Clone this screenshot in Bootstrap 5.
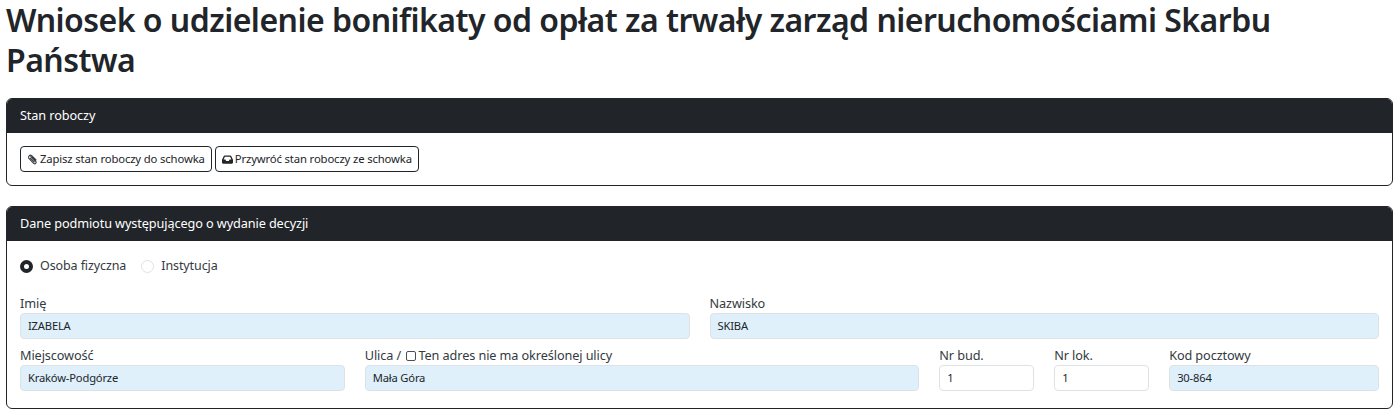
<!DOCTYPE html>
<html lang="pl">
<head>
<meta charset="utf-8">
<title>Wniosek</title>
<link href="https://cdn.jsdelivr.net/npm/bootstrap@5.3.0/dist/css/bootstrap.min.css" rel="stylesheet">
<style>
body{font-family:"Noto Sans","Open Sans",sans-serif;font-size:12px;color:#212529;letter-spacing:-.1px}
.page-wrap{padding:0 2px 0 6px}
.page-title{font-size:32px;line-height:40px;font-weight:600;margin:0 0 18px;letter-spacing:-.53px}
.panel{border:1px solid #212529;border-radius:6px;margin-bottom:20px;overflow:hidden}
.panel-head{background:#212529;color:#fff;height:34px;padding:0 13px;display:flex;align-items:center;font-size:12.7px}
.panel-body{padding:13px 13px 13px}
.btn-line{display:flex;gap:3px}
.tool-btn{font-size:11.3px;letter-spacing:-.14px;line-height:16px;padding:4px 6px;height:26px;border:1px solid #212529;border-radius:4px;color:#212529;background:#fff;display:inline-flex;align-items:center;gap:2px;white-space:nowrap}
.tool-btn svg{width:11px;height:11px;flex:none}
.radio-line{display:flex;align-items:center;gap:15px;height:25px;margin-bottom:14px;font-size:12.5px}
.radio-line label{display:flex;align-items:center;gap:7px;margin:0;color:#343a40}
.radio-mark{width:13px;height:13px;border-radius:50%;background:#fff;border:1px solid #dee2e6;flex:none}
.radio-mark.is-on{border:4px solid #212529}
.field-row{--bs-gutter-x:20px;--bs-gutter-y:0;margin-bottom:6px}
.field-row:last-child{margin-bottom:4px}
.field-label{display:block;font-size:12.7px;line-height:20px;margin:0;color:#343a40}
.field-box{height:26px;font-size:11.2px;letter-spacing:-.18px;line-height:24px;padding:0 7px;border:1px solid #dee2e6;border-radius:4px;background:#fff;color:#212529;width:100%;display:block}
.field-box.is-filled{background:#dff0fb}
.tick{width:10px;height:10px;border:1px solid #495057;border-radius:2px;display:inline-block;vertical-align:-1px;margin:0 -1px 0 2px}
</style>
</head>
<body>
<div class="page-wrap">
<h1 class="page-title">Wniosek o udzielenie bonifikaty od opłat za trwały zarząd nieruchomościami Skarbu Państwa</h1>

<section class="panel">
<div class="panel-head">Stan roboczy</div>
<div class="panel-body btn-line">
<button type="button" class="tool-btn"><svg viewBox="0 0 16 16" fill="none" stroke="#343a40" stroke-width="1.6"><path d="M5 3l8 8a2.2 2.2 0 0 1-3 3L2.500 6a3 3 0 0 1 4-4l7 7"/><path d="M7 4l6 6M4.500 5.500l6.500 6.500"/></svg>Zapisz stan roboczy do schowka</button>
<button type="button" class="tool-btn"><svg viewBox="0 0 16 16"><path fill="#212529" d="M4 2h8a1.500 1.500 0 0 1 1.400 1L16 8.500V12.500a1.500 1.500 0 0 1-1.500 1.500h-13A1.500 1.500 0 0 1 0 12.500V8.500L2.600 3A1.500 1.500 0 0 1 4 2zm.2 2L2.400 8H5l1 2h4l1-2h2.600L11.800 4z"/></svg>Przywróć stan roboczy ze schowka</button>
</div>
</section>

<section class="panel mb-0">
<div class="panel-head">Dane podmiotu występującego o wydanie decyzji</div>
<div class="panel-body">
<div class="radio-line">
<label><span class="radio-mark is-on"></span>Osoba fizyczna</label>
<label><span class="radio-mark"></span>Instytucja</label>
</div>
<div class="row field-row">
<div class="col-6"><span class="field-label">Imię</span><div class="field-box is-filled">IZABELA</div></div>
<div class="col-6"><span class="field-label">Nazwisko</span><div class="field-box is-filled">SKIBA</div></div>
</div>
<div class="row field-row">
<div class="col-3"><span class="field-label">Miejscowość</span><div class="field-box is-filled">Kraków-Podgórze</div></div>
<div class="col-5"><span class="field-label">Ulica / <span class="tick"></span> Ten adres nie ma określonej ulicy</span><div class="field-box is-filled">Mała Góra</div></div>
<div class="col-1"><span class="field-label">Nr bud.</span><div class="field-box">1</div></div>
<div class="col-1"><span class="field-label">Nr lok.</span><div class="field-box">1</div></div>
<div class="col-2"><span class="field-label">Kod pocztowy</span><div class="field-box is-filled">30-864</div></div>
</div>
</div>
</section>
</div>
<script src="https://cdn.jsdelivr.net/npm/bootstrap@5.3.0/dist/js/bootstrap.bundle.min.js"></script>
</body>
</html>
